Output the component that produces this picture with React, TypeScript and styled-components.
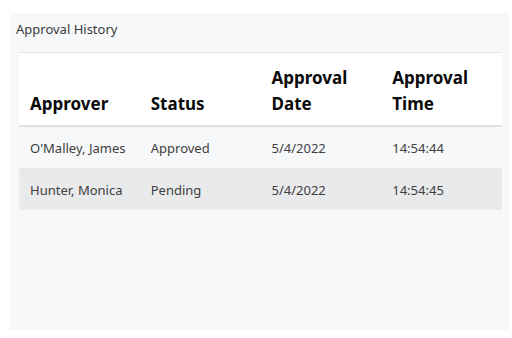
import React from "react";
import styled, { createGlobalStyle } from "styled-components";

const GlobalStyle = createGlobalStyle`
  html, body {
    margin: 0;
    padding: 0;
    background: #ffffff;
  }
  body {
    font-family: "Segoe UI", "Noto Sans", "Open Sans", sans-serif;
  }
`;

const Panel = styled.section`
  box-sizing: border-box;
  margin: 13px 3px 0 10px;
  height: 317px;
  background: #f7f8fa;
  padding: 0 7px 0 9px;
`;

const Title = styled.h2`
  margin: 0 0 0 -3px;
  padding: 7px 0 0;
  height: 39px;
  box-sizing: border-box;
  font-size: 13px;
  font-weight: 400;
  line-height: 18px;
  color: #3a3a3a;
`;

const Table = styled.table`
  width: 100%;
  table-layout: fixed;
  border-collapse: collapse;
  border-top: 1px solid #e3e5e8;
`;

const HeadCell = styled.th`
  height: 64px;
  padding: 0 11px 8px;
  text-align: left;
  vertical-align: bottom;
  background: #ffffff;
  border-bottom: 2px solid #dee1e5;
  font-size: 17px;
  font-weight: 700;
  line-height: 26px;
  color: #0a0a0a;
`;

const Row = styled.tr<{ $shaded?: boolean }>`
  background: ${(p) => (p.$shaded ? "#e9eaec" : "transparent")};
  border-bottom: ${(p) => (p.$shaded ? "none" : "1px solid #e3e5e8")};
`;

const Cell = styled.td`
  height: 41px;
  padding: 0 11px;
  font-size: 13px;
  line-height: 18px;
  color: #404040;
  vertical-align: middle;
`;

const approvals = [
  { approver: "O'Malley, James", status: "Approved", date: "5/4/2022", time: "14:54:44" },
  { approver: "Hunter, Monica", status: "Pending", date: "5/4/2022", time: "14:54:45" },
];

export default function App() {
  return (
    <>
      <GlobalStyle />
      <Panel>
        <Title>Approval History</Title>
        <Table>
          <thead>
            <tr>
              <HeadCell>Approver</HeadCell>
              <HeadCell>Status</HeadCell>
              <HeadCell>Approval Date</HeadCell>
              <HeadCell>Approval Time</HeadCell>
            </tr>
          </thead>
          <tbody>
            {approvals.map((a, i) => (
              <Row key={a.approver} $shaded={i % 2 === 1}>
                <Cell>{a.approver}</Cell>
                <Cell>{a.status}</Cell>
                <Cell>{a.date}</Cell>
                <Cell>{a.time}</Cell>
              </Row>
            ))}
          </tbody>
        </Table>
      </Panel>
    </>
  );
}
